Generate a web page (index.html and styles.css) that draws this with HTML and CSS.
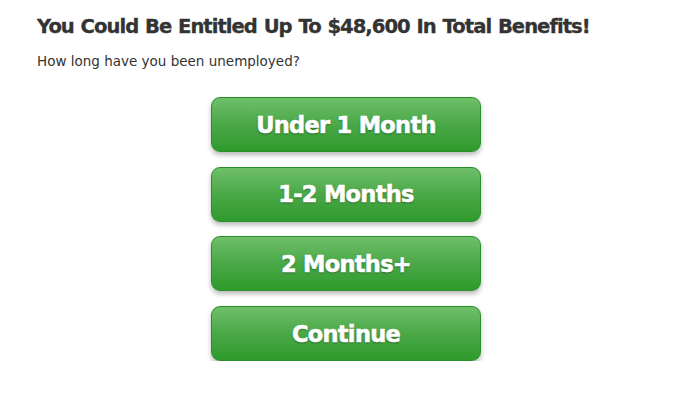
FILE: index.html
```html
<!DOCTYPE html>
<html lang="en">
<head>
<meta charset="utf-8">
<title>Benefits</title>
<link rel="stylesheet" href="styles.css">
</head>
<body>
<main class="page">
  <h1 class="title">You Could Be Entitled Up To $48,600 In Total Benefits!</h1>
  <p class="question">How long have you been unemployed?</p>
  <div class="options">
    <button class="option">Under 1 Month</button>
    <button class="option">1-2 Months</button>
    <button class="option">2 Months+</button>
    <button class="option">Continue</button>
  </div>
</main>
</body>
</html>
```
FILE: styles.css
```css
html, body {
  margin: 0;
  background: #ffffff;
}
.page {
  padding: 13px 45px 0 37px;
  font-family: "DejaVu Sans", "Open Sans", sans-serif;
  color: #333333;
}
.title {
  margin: 0;
  font-size: 19.6px;
  line-height: 28px;
  font-weight: 700;
  letter-spacing: -1px;
  word-spacing: 1px;
  color: #333333;
  -webkit-text-stroke: 0.3px #333333;
}
.question {
  margin: 10px 0 0;
  font-size: 13.5px;
  line-height: 20px;
  font-weight: 400;
  color: #333333;
}
.options {
  display: flex;
  flex-direction: column;
  align-items: center;
  gap: 14.7px;
  margin-top: 26px;
}
.option {
  width: 270px;
  height: 55px;
  border: 1px solid #2a8f2a;
  border-radius: 9px;
  background: linear-gradient(to bottom, #6fbf6a 0%, #4aa847 50%, #2f9a2c 100%);
  box-shadow: 0 3px 5px rgba(0, 0, 0, 0.28);
  color: #ffffff;
  font-family: "DejaVu Sans", "Open Sans", sans-serif;
  font-size: 22.5px;
  font-weight: 700;
  letter-spacing: -0.7px;
  -webkit-text-stroke: 0.6px #ffffff;
  text-shadow: 0 1px 2px rgba(0, 0, 0, 0.45);
  padding: 0;
  cursor: pointer;
}
```
